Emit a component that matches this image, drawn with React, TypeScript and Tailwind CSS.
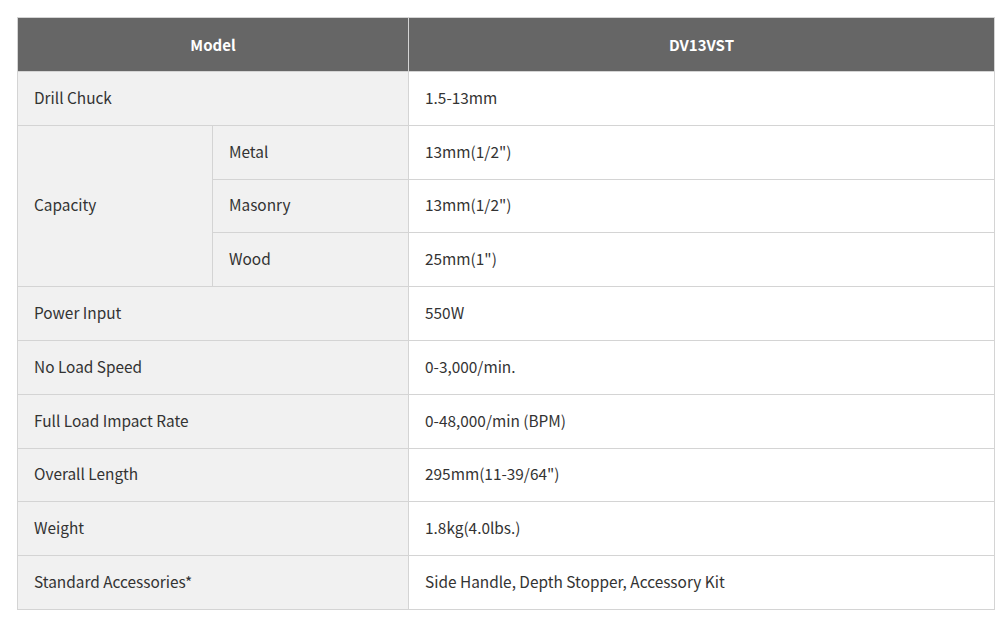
const rows: { label: string; value: string }[] = [
  { label: "Power Input", value: "550W" },
  { label: "No Load Speed", value: "0-3,000/min." },
  { label: "Full Load Impact Rate", value: "0-48,000/min (BPM)" },
  { label: "Overall Length", value: "295mm(11-39/64\")" },
  { label: "Weight", value: "1.8kg(4.0lbs.)" },
  { label: "Standard Accessories*", value: "Side Handle, Depth Stopper, Accessory Kit" },
]

const capacity = [
  { label: "Metal", value: "13mm(1/2\")" },
  { label: "Masonry", value: "13mm(1/2\")" },
  { label: "Wood", value: "25mm(1\")" },
]

const th = "h-[54px] border border-[#d4d4d4] bg-[#666666] pt-[1px] text-center text-[15px] font-bold text-white"
const labelCell = "h-[53.8px] border border-[#d4d4d4] bg-[#f1f1f1] px-[16px] pb-[2px] text-left align-middle"
const valueCell = "h-[53.8px] border border-[#d4d4d4] bg-white px-[16px] pb-[2px] text-left align-middle"

export default function App() {
  return (
    <div className="min-h-[619px] w-[1006px] bg-white pl-[17px] pt-[17px] font-['Noto_Sans_CJK_KR','Noto_Sans',sans-serif] text-[15.4px] text-[#333333]">
      <table className="w-[978px] table-fixed border-collapse">
        <colgroup>
          <col className="w-[195px]" />
          <col className="w-[196px]" />
          <col />
        </colgroup>
        <thead>
          <tr>
            <th colSpan={2} className={th}>
              Model
            </th>
            <th className={th}>DV13VST</th>
          </tr>
        </thead>
        <tbody>
          <tr>
            <td colSpan={2} className={labelCell}>
              Drill Chuck
            </td>
            <td className={valueCell}>1.5-13mm</td>
          </tr>
          {capacity.map((item, i) => (
            <tr key={item.label}>
              {i === 0 && (
                <td rowSpan={3} className={labelCell}>
                  Capacity
                </td>
              )}
              <td className={labelCell}>{item.label}</td>
              <td className={valueCell}>{item.value}</td>
            </tr>
          ))}
          {rows.map((row) => (
            <tr key={row.label}>
              <td colSpan={2} className={labelCell}>
                {row.label}
              </td>
              <td className={valueCell}>{row.value}</td>
            </tr>
          ))}
        </tbody>
      </table>
    </div>
  )
}
